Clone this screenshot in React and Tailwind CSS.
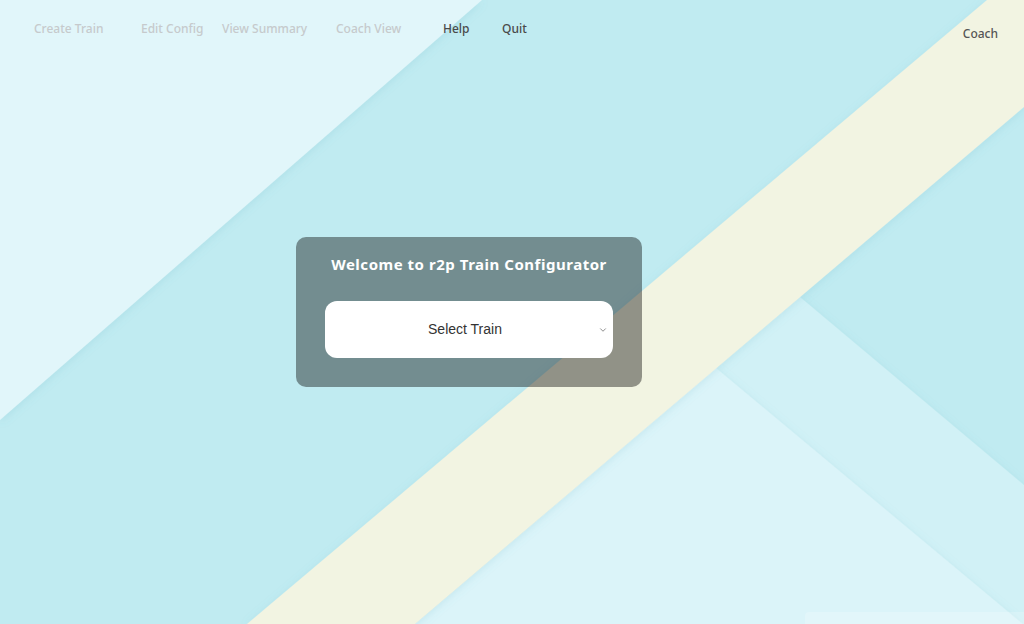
import { ChevronDown } from "lucide-react";

const navItems = [
  { label: "Create Train", w: "w-[107px]", on: false },
  { label: "Edit Config", w: "w-[81px]", on: false },
  { label: "View Summary", w: "w-[114px]", on: false },
  { label: "Coach View", w: "w-[107px]", on: false },
  { label: "Help", w: "w-[59px]", on: true },
  { label: "Quit", w: "w-auto", on: true },
];

function Backdrop() {
  return (
    <svg
      className="absolute inset-0 h-full w-full"
      viewBox="0 0 1024 624"
      preserveAspectRatio="none"
    >
      <defs>
        <filter id="soft" x="-10%" y="-10%" width="120%" height="120%">
          <feDropShadow dx="0" dy="2" stdDeviation="4" floodColor="#5aaec0" floodOpacity="0.18" />
        </filter>
      </defs>
      <rect width="1024" height="624" fill="#c0ebf1" />
      <polygon points="0,0 482,0 0,420" fill="#e1f6fa" filter="url(#soft)" />
      <polygon points="800,297 1024,485 1024,624 415,624" fill="#d1f1f6" filter="url(#soft)" />
      <polygon points="716,368 1024,625 415,624" fill="#dbf4f9" filter="url(#soft)" />
      <polygon points="987,0 1024,0 1024,107 415,624 247,624" fill="#f2f4e2" filter="url(#soft)" />
    </svg>
  );
}

export default function App() {
  return (
    <div
      className="relative h-[624px] w-full overflow-hidden"
      style={{ fontFamily: '"Noto Sans", Inter, sans-serif' }}
    >
      <Backdrop />

      <div className="relative flex h-full flex-col">
        <header className="flex items-start justify-between pl-[34px] pr-[26px] pt-[20px]">
          <nav className="flex text-[12px] font-medium">
            {navItems.map((n) => (
              <span
                key={n.label}
                className={`${n.w} ${n.on ? "text-[#4a4a4a]" : "text-[#c6cacc]"}`}
              >
                {n.label}
              </span>
            ))}
          </nav>
          <span className="pt-[5px] text-[12px] font-medium text-[#555]">Coach</span>
        </header>

        <main className="flex flex-1 items-center justify-center pb-[43px] pr-[86px]">
          <div className="w-[346px] rounded-[10px] bg-black/40 px-[29px] pb-[29px] pt-[16px]">
            <h1 className="whitespace-nowrap text-center text-[15px] font-bold tracking-[0.035em] text-white">
              Welcome to r2p Train Configurator
            </h1>
            <div className="relative mt-[26px] flex h-[57px] items-center justify-center rounded-[12px] bg-white pr-[8px]">
              <span
                className="text-[14px] text-[#333]"
                style={{ fontFamily: '"Liberation Sans", Arial, sans-serif' }}
              >
                Select Train
              </span>
              <ChevronDown className="absolute right-[5px] h-[10px] w-[10px] text-[#777]" strokeWidth={2} />
            </div>
          </div>
        </main>
      </div>

      <div className="absolute bottom-0 right-0 h-[12px] w-[219px] rounded-tl-[4px] bg-white/20" />
    </div>
  );
}
